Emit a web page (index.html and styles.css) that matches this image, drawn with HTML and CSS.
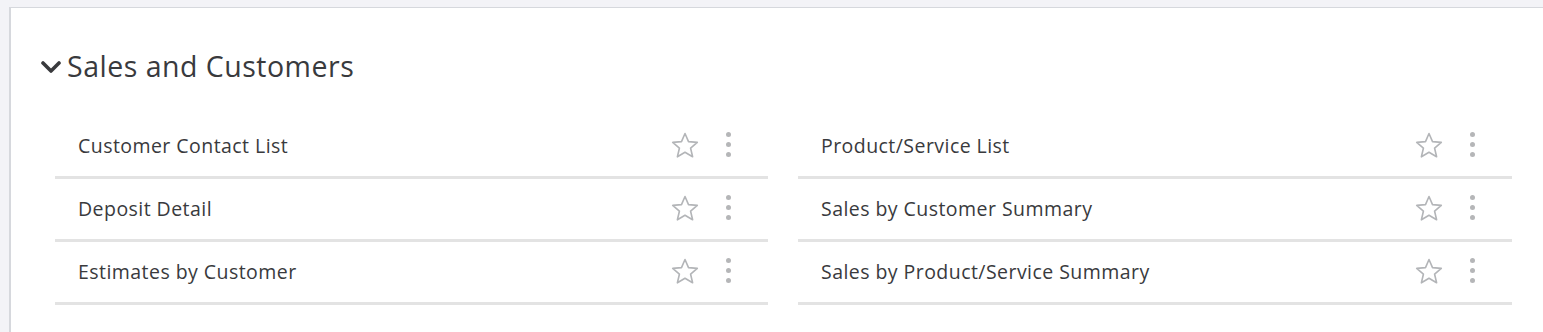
FILE: index.html
```html
<!DOCTYPE html>
<html lang="en">
<head>
    <meta charset="UTF-8">
    <title>Reports - Sales and Customers</title>
    <link rel="stylesheet" href="styles.css">
</head>
<body>

    <!-- Report group -->
    <div class="report-group">
        <h2 class="group-title">
            <svg class="chevron" width="20" height="12" viewBox="0 0 20 12">
                <path d="M2 2 L10 10 L18 2" fill="none" stroke="#393a3d" stroke-width="3.6" stroke-linecap="round" stroke-linejoin="round"/>
            </svg>
            Sales and Customers
        </h2>

        <div class="report-list">
            <div class="report-row">
                <span class="report-name">Customer Contact List</span>
                <span class="report-actions">
                    <svg class="star" width="30" height="28" viewBox="0 0 30 28"><path d="M15 2.5 L18.5 10.6 L27.3 11.4 L20.6 17.2 L22.6 25.8 L15 21.3 L7.4 25.8 L9.4 17.2 L2.7 11.4 L11.5 10.6 Z" fill="none" stroke="#b3b5b8" stroke-width="1.6" stroke-linejoin="round"/></svg>
                    <span class="more"><i></i><i></i><i></i></span>
                </span>
            </div>
            <div class="report-row">
                <span class="report-name">Product/Service List</span>
                <span class="report-actions">
                    <svg class="star" width="30" height="28" viewBox="0 0 30 28"><path d="M15 2.5 L18.5 10.6 L27.3 11.4 L20.6 17.2 L22.6 25.8 L15 21.3 L7.4 25.8 L9.4 17.2 L2.7 11.4 L11.5 10.6 Z" fill="none" stroke="#b3b5b8" stroke-width="1.6" stroke-linejoin="round"/></svg>
                    <span class="more"><i></i><i></i><i></i></span>
                </span>
            </div>
            <div class="report-row">
                <span class="report-name">Deposit Detail</span>
                <span class="report-actions">
                    <svg class="star" width="30" height="28" viewBox="0 0 30 28"><path d="M15 2.5 L18.5 10.6 L27.3 11.4 L20.6 17.2 L22.6 25.8 L15 21.3 L7.4 25.8 L9.4 17.2 L2.7 11.4 L11.5 10.6 Z" fill="none" stroke="#b3b5b8" stroke-width="1.6" stroke-linejoin="round"/></svg>
                    <span class="more"><i></i><i></i><i></i></span>
                </span>
            </div>
            <div class="report-row">
                <span class="report-name">Sales by Customer Summary</span>
                <span class="report-actions">
                    <svg class="star" width="30" height="28" viewBox="0 0 30 28"><path d="M15 2.5 L18.5 10.6 L27.3 11.4 L20.6 17.2 L22.6 25.8 L15 21.3 L7.4 25.8 L9.4 17.2 L2.7 11.4 L11.5 10.6 Z" fill="none" stroke="#b3b5b8" stroke-width="1.6" stroke-linejoin="round"/></svg>
                    <span class="more"><i></i><i></i><i></i></span>
                </span>
            </div>
            <div class="report-row">
                <span class="report-name">Estimates by Customer</span>
                <span class="report-actions">
                    <svg class="star" width="30" height="28" viewBox="0 0 30 28"><path d="M15 2.5 L18.5 10.6 L27.3 11.4 L20.6 17.2 L22.6 25.8 L15 21.3 L7.4 25.8 L9.4 17.2 L2.7 11.4 L11.5 10.6 Z" fill="none" stroke="#b3b5b8" stroke-width="1.6" stroke-linejoin="round"/></svg>
                    <span class="more"><i></i><i></i><i></i></span>
                </span>
            </div>
            <div class="report-row">
                <span class="report-name">Sales by Product/Service Summary</span>
                <span class="report-actions">
                    <svg class="star" width="30" height="28" viewBox="0 0 30 28"><path d="M15 2.5 L18.5 10.6 L27.3 11.4 L20.6 17.2 L22.6 25.8 L15 21.3 L7.4 25.8 L9.4 17.2 L2.7 11.4 L11.5 10.6 Z" fill="none" stroke="#b3b5b8" stroke-width="1.6" stroke-linejoin="round"/></svg>
                    <span class="more"><i></i><i></i><i></i></span>
                </span>
            </div>
        </div>
    </div>

</body>
</html>
```
FILE: styles.css
```css
body {
    margin: 0;
    background: #f3f3f7;
    font-family: 'Open Sans', sans-serif;
    color: #393a3d;
    height: 100vh;
    overflow: hidden;
}

/* Report group card */
.report-group {
    margin: 7px 0 0 9px;
    border-top: 1px solid #d6d8dd;
    border-left: 2px solid #d6d8dd;
    background: #fff;
    height: 100vh;
    padding-left: 44px;
}

.group-title {
    display: flex;
    align-items: center;
    height: 108px;
    margin: 0 0 0 -14px;
    padding-top: 8px;
    box-sizing: border-box;
    font-size: 28.5px;
    letter-spacing: 0.5px;
    font-weight: 400;
}

.chevron {
    margin-right: 6px;
    margin-top: 1px;
}

/* Report rows */
.report-list {
    display: grid;
    grid-template-columns: 713px 714px;
    column-gap: 30px;
}

.report-row {
    display: flex;
    align-items: center;
    justify-content: space-between;
    height: 60px;
    border-bottom: 3px solid #e3e3e3;
    padding-left: 23px;
}

.report-name {
    font-size: 19.5px;
    letter-spacing: 0.45px;
    margin-top: -2px;
}

.report-actions {
    display: flex;
    align-items: center;
    margin-right: 37px;
    margin-top: -3px;
}

.star {
    margin-right: 26px;
}

.more {
    display: flex;
    flex-direction: column;
    gap: 5px;
}

.more i {
    width: 5px;
    height: 5px;
    border-radius: 50%;
    background: #b5b6b8;
}
```
